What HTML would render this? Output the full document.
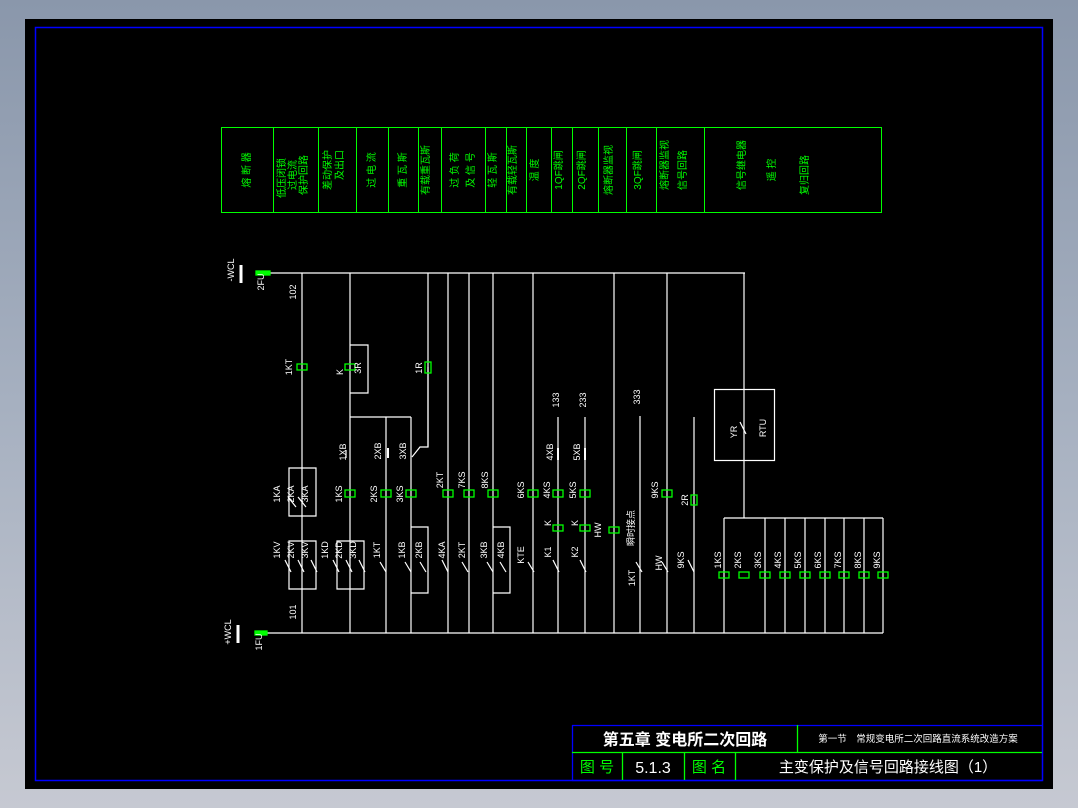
<!DOCTYPE html>
<html><head><meta charset="utf-8"><style>
html,body{margin:0;padding:0;width:1078px;height:808px;overflow:hidden;background:linear-gradient(#8a97ab,#a6b0c0 50%,#c6c9d2);}
svg{position:absolute;left:0;top:0}
text{font-family:"Liberation Sans","Noto Sans CJK SC",sans-serif}
.w{fill:#fff;font-size:9px}
.g{fill:#00ff00;font-size:10px}
</style></head><body>
<svg width="1078" height="808" viewBox="0 0 1078 808">
<rect x="25" y="19" width="1028" height="770" fill="#000"/>
<rect x="35.5" y="27.5" width="1007" height="753" fill="none" stroke="#0000ff" stroke-width="1.5"/>

<!-- top table -->
<g stroke="#00ff00" stroke-width="1" fill="none">
<rect x="221.5" y="127.5" width="660" height="85"/>
<path d="M273.5 127v85M318.5 127v85M356.5 127v85M388.5 127v85M418.5 127v85M441.5 127v85M485.5 127v85M506.5 127v85M526.5 127v85M551.5 127v85M572.5 127v85M598.5 127v85M626.5 127v85M656.5 127v85M704.5 127v85"/>
</g>
<g class="g" text-anchor="middle">
<text transform="translate(250,170) rotate(-90)">熔 断 器</text>
<text transform="translate(285,178) rotate(-90)">低压闭锁</text>
<text transform="translate(296,175) rotate(-90)">过电流</text>
<text transform="translate(307,175) rotate(-90)">保护回路</text>
<text transform="translate(331,170) rotate(-90)">差动保护</text>
<text transform="translate(343,165) rotate(-90)">及出口</text>
<text transform="translate(375,170) rotate(-90)">过 电 流</text>
<text transform="translate(406,170) rotate(-90)">重 瓦 斯</text>
<text transform="translate(429,170) rotate(-90)">有载重瓦斯</text>
<text transform="translate(458,170) rotate(-90)">过 负 荷</text>
<text transform="translate(474,170) rotate(-90)">及 信 号</text>
<text transform="translate(496,170) rotate(-90)">轻 瓦 斯</text>
<text transform="translate(516,170) rotate(-90)">有载轻瓦斯</text>
<text transform="translate(538,170) rotate(-90)">温  度</text>
<text transform="translate(562,170) rotate(-90)">1QF跳闸</text>
<text transform="translate(585,170) rotate(-90)">2QF跳闸</text>
<text transform="translate(612,170) rotate(-90)">熔断器监视</text>
<text transform="translate(641,170) rotate(-90)">3QF跳闸</text>
<text transform="translate(668,165) rotate(-90)">熔断器监视</text>
<text transform="translate(686,170) rotate(-90)">信号回路</text>
<text transform="translate(745,165) rotate(-90)">信号继电器</text>
<text transform="translate(775,170) rotate(-90)">遥   控</text>
<text transform="translate(808,175) rotate(-90)">复归回路</text>
</g>

<!-- circuit -->
<g stroke="#fff" stroke-width="1.2" fill="none">
<path d="M241 265v18M238 625v18" stroke-width="3"/>
<path d="M262 273H745M262 633H883"/>
<path d="M302 273V633M350 273V633M428 273V447M448 273V633M469 273V633M493 273V633M533 273V633M614 273V633M667 273V633M744 273V518"/>
<path d="M350 417H411M386 417V633M411 417V633"/>
<path d="M558 417V633M585 417V633M640 416V633M694 417V633"/>
<path d="M350 345h18v48h-18"/>
<path d="M428 367v80h-8l-8 10"/>
<rect x="714.5" y="389.5" width="60" height="71"/>
<path d="M724 518H883M724 518V633M765 518V633M785 518V633M805 518V633M825 518V633M844 518V633M864 518V633M883 518V633"/>
<!-- 1KA box -->
<path d="M289 468h27v48h-27zM289 541h27v48h-27zM337 541h27v48h-27z"/>
<path d="M411 527h17v66h-17M493 527h17v66h-17"/>
<!-- switch marks -->
<path d="M285 560l6 12M298 560l6 12M311 560l6 12M333 560l6 12M346 560l6 12M359 560l6 12M380 562l6 10M405 562l6 10M420 562l6 10M442 560l6 12M462 562l6 10M487 562l6 10M500 562l6 10M528 562l6 10M553 560l6 12M580 560l6 12M636 562l6 10M662 562l6 10M688 560l6 12M740 422l6 12"/>
<path d="M288 497l8 10M298 497l8 10M346 450v8" />
<path d="M388 448v10M558 448v12M585 448v12M634 411v0" stroke-width="2"/>
</g>
<!-- green relays -->
<g stroke="#00ff00" stroke-width="1.3" fill="none">
<rect x="256" y="271" width="14" height="4" fill="#00ff00"/>
<rect x="255" y="631" width="12" height="4" fill="#00ff00"/>
<rect x="297" y="364" width="10" height="6"/>
<rect x="345" y="364" width="10" height="6"/>
<rect x="425" y="362" width="6" height="11"/>
<rect x="345" y="490" width="10" height="7"/>
<rect x="381" y="490" width="10" height="7"/>
<rect x="406" y="490" width="10" height="7"/>
<rect x="443" y="490" width="10" height="7"/>
<rect x="464" y="490" width="10" height="7"/>
<rect x="488" y="490" width="10" height="7"/>
<rect x="528" y="490" width="10" height="7"/>
<rect x="553" y="490" width="10" height="7"/>
<rect x="580" y="490" width="10" height="7"/>
<rect x="662" y="490" width="10" height="7"/>
<rect x="691" y="495" width="6" height="10"/>
<rect x="553" y="525" width="10" height="6"/>
<rect x="580" y="525" width="10" height="6"/>
<rect x="609" y="527" width="10" height="6"/>
<rect x="719" y="572" width="10" height="6"/><rect x="739" y="572" width="10" height="6"/><rect x="760" y="572" width="10" height="6"/><rect x="780" y="572" width="10" height="6"/><rect x="800" y="572" width="10" height="6"/><rect x="820" y="572" width="10" height="6"/><rect x="839" y="572" width="10" height="6"/><rect x="859" y="572" width="10" height="6"/><rect x="878" y="572" width="10" height="6"/>
</g>
<!-- labels -->
<g class="w" text-anchor="middle">
<text transform="translate(234,270) rotate(-90)">-WCL</text>
<text transform="translate(264,282) rotate(-90)">2FU</text>
<text transform="translate(231,632) rotate(-90)">+WCL</text>
<text transform="translate(262,642) rotate(-90)">1FU</text>
<text transform="translate(296,292) rotate(-90)">102</text>
<text transform="translate(296,612) rotate(-90)">101</text>
<text transform="translate(292,367) rotate(-90)">1KT</text>
<text transform="translate(343,372) rotate(-90)">K</text>
<text transform="translate(361,368) rotate(-90)">3R</text>
<text transform="translate(422,368) rotate(-90)">1R</text>
<text transform="translate(346,452) rotate(-90)">1XB</text>
<text transform="translate(381,451) rotate(-90)">2XB</text>
<text transform="translate(406,451) rotate(-90)">3XB</text>
<text transform="translate(280,494) rotate(-90)">1KA</text>
<text transform="translate(294,494) rotate(-90)">2KA</text>
<text transform="translate(308,494) rotate(-90)">3KA</text>
<text transform="translate(342,494) rotate(-90)">1KS</text>
<text transform="translate(377,494) rotate(-90)">2KS</text>
<text transform="translate(403,494) rotate(-90)">3KS</text>
<text transform="translate(443,480) rotate(-90)">2KT</text>
<text transform="translate(465,480) rotate(-90)">7KS</text>
<text transform="translate(488,480) rotate(-90)">8KS</text>
<text transform="translate(524,490) rotate(-90)">6KS</text>
<text transform="translate(550,490) rotate(-90)">4KS</text>
<text transform="translate(576,490) rotate(-90)">5KS</text>
<text transform="translate(553,452) rotate(-90)">4XB</text>
<text transform="translate(580,452) rotate(-90)">5XB</text>
<text transform="translate(559,400) rotate(-90)">133</text>
<text transform="translate(586,400) rotate(-90)">233</text>
<text transform="translate(640,397) rotate(-90)">333</text>
<text transform="translate(658,490) rotate(-90)">9KS</text>
<text transform="translate(688,500) rotate(-90)">2R</text>
<text transform="translate(737,432) rotate(-90)">YR</text>
<text transform="translate(766,428) rotate(-90)">RTU</text>
<text transform="translate(280,550) rotate(-90)">1KV</text>
<text transform="translate(294,550) rotate(-90)">2KV</text>
<text transform="translate(308,550) rotate(-90)">3KV</text>
<text transform="translate(328,550) rotate(-90)">1KD</text>
<text transform="translate(342,550) rotate(-90)">2KD</text>
<text transform="translate(356,550) rotate(-90)">3KD</text>
<text transform="translate(380,550) rotate(-90)">1KT</text>
<text transform="translate(405,550) rotate(-90)">1KB</text>
<text transform="translate(422,550) rotate(-90)">2KB</text>
<text transform="translate(445,550) rotate(-90)">4KA</text>
<text transform="translate(465,550) rotate(-90)">2KT</text>
<text transform="translate(487,550) rotate(-90)">3KB</text>
<text transform="translate(504,550) rotate(-90)">4KB</text>
<text transform="translate(524,555) rotate(-90)">KTE</text>
<text transform="translate(551,552) rotate(-90)">K1</text>
<text transform="translate(578,552) rotate(-90)">K2</text>
<text transform="translate(551,523) rotate(-90)">K</text>
<text transform="translate(578,523) rotate(-90)">K</text>
<text transform="translate(601,530) rotate(-90)">HW</text>
<text transform="translate(634,528) rotate(-90)">瞬时接点</text>
<text transform="translate(635,578) rotate(-90)">1KT</text>
<text transform="translate(662,563) rotate(-90)">HW</text>
<text transform="translate(684,560) rotate(-90)">9KS</text>
<text transform="translate(721,560) rotate(-90)">1KS</text>
<text transform="translate(741,560) rotate(-90)">2KS</text>
<text transform="translate(761,560) rotate(-90)">3KS</text>
<text transform="translate(781,560) rotate(-90)">4KS</text>
<text transform="translate(801,560) rotate(-90)">5KS</text>
<text transform="translate(821,560) rotate(-90)">6KS</text>
<text transform="translate(841,560) rotate(-90)">7KS</text>
<text transform="translate(861,560) rotate(-90)">8KS</text>
<text transform="translate(880,560) rotate(-90)">9KS</text>
</g>

<!-- title block -->
<g fill="none" stroke-width="1.3">
<path d="M572 725.5H1042M572 780.5H1042M572.5 725V780" stroke="#0000ff"/>
<path d="M572 752.5H1042M797.5 725V752M622.5 752V780M684.5 752V780M735.5 752V780" stroke="#00ff00"/>
</g>
<text x="685" y="745" fill="#fff" font-size="16" font-weight="bold" text-anchor="middle">第五章 变电所二次回路</text>
<text x="918" y="742" fill="#fff" font-size="9.5" text-anchor="middle">第一节　常规变电所二次回路直流系统改造方案</text>
<text x="597" y="772" fill="#00ff00" font-size="15" text-anchor="middle">图 号</text>
<text x="653" y="773" fill="#fff" font-size="16" text-anchor="middle">5.1.3</text>
<text x="709" y="772" fill="#00ff00" font-size="15" text-anchor="middle">图 名</text>
<text x="888" y="772" fill="#fff" font-size="15" text-anchor="middle">主变保护及信号回路接线图（1）</text>
</svg>
</body></html>
